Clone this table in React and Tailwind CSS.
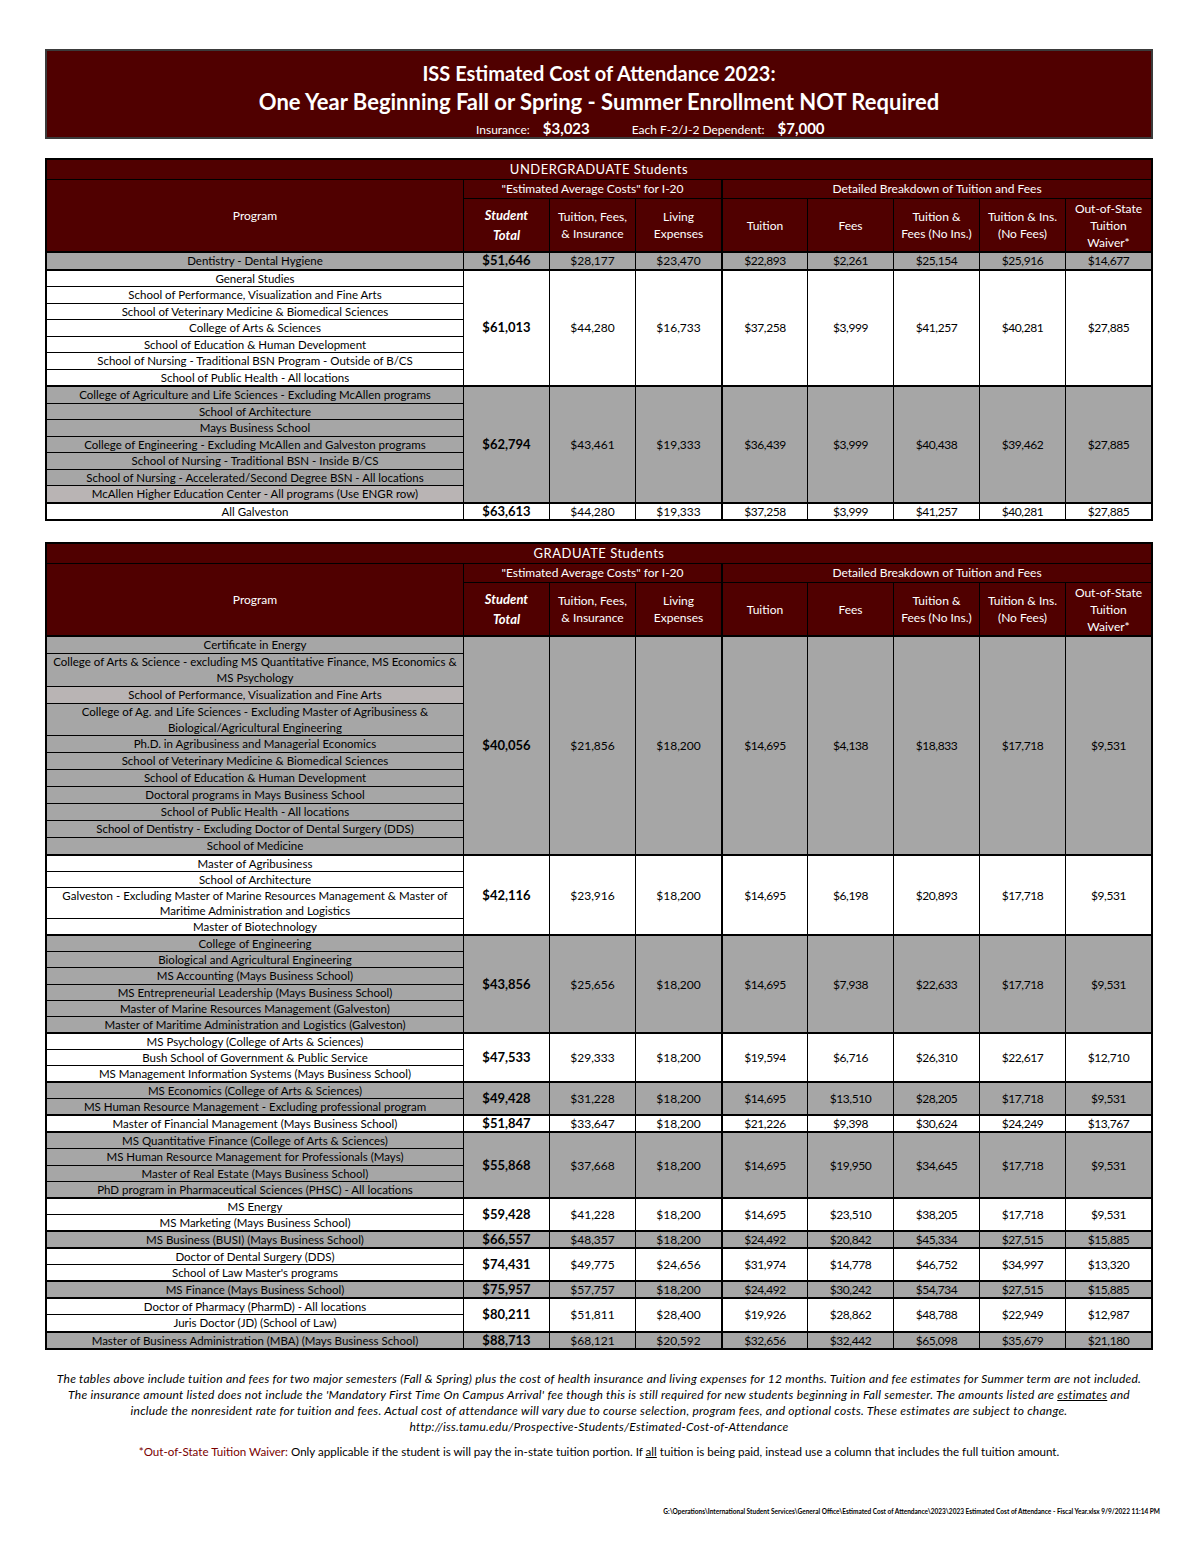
import React from "react";

const ugRows = [
	{
		gray: true,
		programs: [["Dentistry - Dental Hygiene"]],
		values: ["$51,646", "$28,177", "$23,470", "$22,893", "$2,261", "$25,154", "$25,916", "$14,677"],
	},
	{
		gray: false,
		programs: [
			["General Studies"],
			["School of Performance, Visualization and Fine Arts"],
			["School of Veterinary Medicine & Biomedical Sciences"],
			["College of Arts & Sciences"],
			["School of Education & Human Development"],
			["School of Nursing - Traditional BSN Program - Outside of B/CS"],
			["School of Public Health - All locations"],
		],
		values: ["$61,013", "$44,280", "$16,733", "$37,258", "$3,999", "$41,257", "$40,281", "$27,885"],
	},
	{
		gray: true,
		programs: [
			["College of Agriculture and Life Sciences - Excluding McAllen programs"],
			["School of Architecture"],
			["Mays Business School"],
			["College of Engineering - Excluding McAllen and Galveston programs"],
			["School of Nursing - Traditional BSN - Inside B/CS"],
			["School of Nursing - Accelerated/Second Degree BSN - All locations"],
			["McAllen Higher Education Center - All programs (Use ENGR row)"],
		],
		light: [6],
		values: ["$62,794", "$43,461", "$19,333", "$36,439", "$3,999", "$40,438", "$39,462", "$27,885"],
	},
	{
		gray: false,
		programs: [["All Galveston"]],
		values: ["$63,613", "$44,280", "$19,333", "$37,258", "$3,999", "$41,257", "$40,281", "$27,885"],
	},
];

const gradRows = [
	{
		gray: true,
		tall: true,
		programs: [
			["Certificate in Energy"],
			["College of Arts & Science - excluding MS Quantitative Finance, MS Economics &", "MS Psychology"],
			["School of Performance, Visualization and Fine Arts"],
			["College of Ag. and Life Sciences - Excluding Master of Agribusiness &", "Biological/Agricultural Engineering"],
			["Ph.D. in Agribusiness and Managerial Economics"],
			["School of Veterinary Medicine & Biomedical Sciences"],
			["School of Education & Human Development"],
			["Doctoral programs in Mays Business School"],
			["School of Public Health - All locations"],
			["School of Dentistry - Excluding Doctor of Dental Surgery (DDS)"],
			["School of Medicine"],
		],
		light: [2],
		values: ["$40,056", "$21,856", "$18,200", "$14,695", "$4,138", "$18,833", "$17,718", "$9,531"],
	},
	{
		gray: false,
		programs: [
			["Master of Agribusiness"],
			["School of Architecture"],
			["Galveston - Excluding Master of Marine Resources Management & Master of", "Maritime Administration and Logistics"],
			["Master of Biotechnology"],
		],
		values: ["$42,116", "$23,916", "$18,200", "$14,695", "$6,198", "$20,893", "$17,718", "$9,531"],
	},
	{
		gray: true,
		programs: [
			["College of Engineering"],
			["Biological and Agricultural Engineering"],
			["MS Accounting (Mays Business School)"],
			["MS Entrepreneurial Leadership (Mays Business School)"],
			["Master of Marine Resources Management (Galveston)"],
			["Master of Maritime Administration and Logistics (Galveston)"],
		],
		values: ["$43,856", "$25,656", "$18,200", "$14,695", "$7,938", "$22,633", "$17,718", "$9,531"],
	},
	{
		gray: false,
		programs: [
			["MS Psychology (College of Arts & Sciences)"],
			["Bush School of Government & Public Service"],
			["MS Management Information Systems (Mays Business School)"],
		],
		values: ["$47,533", "$29,333", "$18,200", "$19,594", "$6,716", "$26,310", "$22,617", "$12,710"],
	},
	{
		gray: true,
		programs: [
			["MS Economics (College of Arts & Sciences)"],
			["MS Human Resource Management - Excluding professional program"],
		],
		values: ["$49,428", "$31,228", "$18,200", "$14,695", "$13,510", "$28,205", "$17,718", "$9,531"],
	},
	{
		gray: false,
		programs: [["Master of Financial Management (Mays Business School)"]],
		values: ["$51,847", "$33,647", "$18,200", "$21,226", "$9,398", "$30,624", "$24,249", "$13,767"],
	},
	{
		gray: true,
		programs: [
			["MS Quantitative Finance (College of Arts & Sciences)"],
			["MS Human Resource Management for Professionals (Mays)"],
			["Master of Real Estate (Mays Business School)"],
			["PhD program in Pharmaceutical Sciences (PHSC) - All locations"],
		],
		values: ["$55,868", "$37,668", "$18,200", "$14,695", "$19,950", "$34,645", "$17,718", "$9,531"],
	},
	{
		gray: false,
		programs: [["MS Energy"], ["MS Marketing (Mays Business School)"]],
		values: ["$59,428", "$41,228", "$18,200", "$14,695", "$23,510", "$38,205", "$17,718", "$9,531"],
	},
	{
		gray: true,
		programs: [["MS Business (BUSI) (Mays Business School)"]],
		values: ["$66,557", "$48,357", "$18,200", "$24,492", "$20,842", "$45,334", "$27,515", "$15,885"],
	},
	{
		gray: false,
		programs: [["Doctor of Dental Surgery (DDS)"], ["School of Law Master's programs"]],
		values: ["$74,431", "$49,775", "$24,656", "$31,974", "$14,778", "$46,752", "$34,997", "$13,320"],
	},
	{
		gray: true,
		programs: [["MS Finance (Mays Business School)"]],
		values: ["$75,957", "$57,757", "$18,200", "$24,492", "$30,242", "$54,734", "$27,515", "$15,885"],
	},
	{
		gray: false,
		programs: [["Doctor of Pharmacy (PharmD) - All locations"], ["Juris Doctor (JD) (School of Law)"]],
		values: ["$80,211", "$51,811", "$28,400", "$19,926", "$28,862", "$48,788", "$22,949", "$12,987"],
	},
	{
		gray: true,
		programs: [["Master of Business Administration (MBA) (Mays Business School)"]],
		values: ["$88,713", "$68,121", "$20,592", "$32,656", "$32,442", "$65,098", "$35,679", "$21,180"],
	},
];

const colHeads = [
	["Tuition, Fees,", "& Insurance"],
	["Living", "Expenses"],
	["Tuition"],
	["Fees"],
	["Tuition &", "Fees (No Ins.)"],
	["Tuition & Ins.", "(No Fees)"],
	["Out-of-State", "Tuition", "Waiver*"],
];

const TableHead = ({ title }) => (
	<div className="bg-[#500000] text-white">
		<div className="h-[20px] border-b border-black flex items-center justify-center text-[13px] tracking-[0.5px]">
			{title}
		</div>
		<div className="flex">
			<div className="w-[416px] flex items-center justify-center text-[12px]">Program</div>
			<div className="flex flex-col">
				<div className="flex h-[19px] border-b border-black text-[12px]">
					<div className="w-[258px] border-l border-black flex items-center justify-center">
						"Estimated Average Costs" for I-20
					</div>
					<div className="w-[430px] border-l-2 border-black flex items-center justify-center">
						Detailed Breakdown of Tuition and Fees
					</div>
				</div>
				<div className="flex h-[52px]">
					<div className="w-[86px] border-l border-black flex flex-col items-center justify-center text-[13px] font-bold italic leading-[20px]">
						<div>Student</div>
						<div>Total</div>
					</div>
					{colHeads.map((lines, i) => (
						<div
							key={i}
							className={`w-[86px] ${i === 2 ? "border-l-2" : "border-l"} border-black flex flex-col items-center justify-center text-[12px] leading-[17px]`}
						>
							{lines.map((l) => (
								<div key={l}>{l}</div>
							))}
						</div>
					))}
				</div>
			</div>
		</div>
	</div>
);

const Group = ({ row, lead }) => (
	<div className={`flex border-t-2 border-black ${row.gray ? "bg-[#a6a6a6]" : "bg-white"}`}>
		<div className="w-[416px] flex flex-col">
			{row.programs.map((lines, i) => (
				<div
					key={i}
					className={`text-center text-[11.5px] ${row.tall ? "leading-[15.9px]" : lead} ${
						i > 0 ? "border-t border-black" : ""
					} ${row.light && row.light.includes(i) ? "bg-[#b9b4b4]" : ""}`}
				>
					{lines.map((l) => (
						<div key={l}>{l}</div>
					))}
				</div>
			))}
		</div>
		{row.values.map((v, i) => (
			<div
				key={i}
				className={`w-[86px] ${i === 3 ? "border-l-2" : "border-l"} border-black flex items-center justify-center leading-[15px] ${
					i === 0 ? "text-[13px] font-bold" : "text-[12px]"
				} ${i >= 3 ? "tracking-[-0.4px]" : ""}`}
			>
				{v}
			</div>
		))}
	</div>
);

const CostTable = ({ title, rows, lead }) => (
	<div className="w-[1108px] border-2 border-black">
		<TableHead title={title} />
		{rows.map((row, i) => (
			<Group key={i} row={row} lead={lead} />
		))}
	</div>
);

export default function App() {
	return (
		<div className="w-[1200px] h-[1553px] bg-white text-black font-['Lato','Liberation_Sans',sans-serif] pt-[49px] pl-[45px]">
			<div className="w-[1108px] h-[90px] border-2 border-[#3b3b3b] bg-[#500000] text-white pt-[9px]">
				<div className="text-center text-[20px] font-bold leading-[27px]">ISS Estimated Cost of Attendance 2023:</div>
				<div className="text-center text-[22px] font-bold leading-[30px]">
					One Year Beginning Fall or Spring - Summer Enrollment NOT Required
				</div>
				<div className="flex items-baseline ml-[429px] leading-[22px]">
					<span className="text-[12px]">Insurance:</span>
					<span className="text-[15px] font-bold ml-[13px]">$3,023</span>
					<span className="text-[12px] ml-[42px]">Each F-2/J-2 Dependent:</span>
					<span className="text-[15px] font-bold ml-[13px]">$7,000</span>
				</div>
			</div>

			<div className="mt-[19px]">
				<CostTable title="UNDERGRADUATE Students" rows={ugRows} lead="leading-[15.5px]" />
			</div>

			<div className="mt-[21px]">
				<CostTable title="GRADUATE Students" rows={gradRows} lead="leading-[15.1px]" />
			</div>

			<div className="w-[1108px] mt-[21px] text-center text-[12px] tracking-[0.25px] italic leading-[16px]">
				<p>
					The tables above include tuition and fees for two major semesters (Fall &amp; Spring) plus the cost of health
					insurance and living expenses for 12 months. Tuition and fee estimates for Summer term are not included.
				</p>
				<p>
					The insurance amount listed does not include the 'Mandatory First Time On Campus Arrival' fee though this is
					still required for new students beginning in Fall semester. The amounts listed are{" "}
					<span className="underline">estimates</span> and
				</p>
				<p>
					include the nonresident rate for tuition and fees. Actual cost of attendance will vary due to course selection,
					program fees, and optional costs. These estimates are subject to change.
				</p>
				<p>http://iss.tamu.edu/Prospective-Students/Estimated-Cost-of-Attendance</p>
			</div>

			<div className="w-[1108px] mt-[9px] text-center text-[11.6px] leading-[16px]">
				<span className="text-[#7a0000]">*Out-of-State Tuition Waiver:</span> Only applicable if the student is will pay
				the in-state tuition portion. If <span className="underline">all</span> tuition is being paid, instead use a column
				that includes the full tuition amount.
			</div>

			<div className="w-[1115px] mt-[48px] text-right text-[6.5px] leading-[8px] font-bold">
				G:\Operations\International Student Services\General Office\Estimated Cost of Attendance\2023\2023 Estimated Cost
				of Attendance - Fiscal Year.xlsx 9/9/2022 11:14 PM
			</div>
		</div>
	);
}
